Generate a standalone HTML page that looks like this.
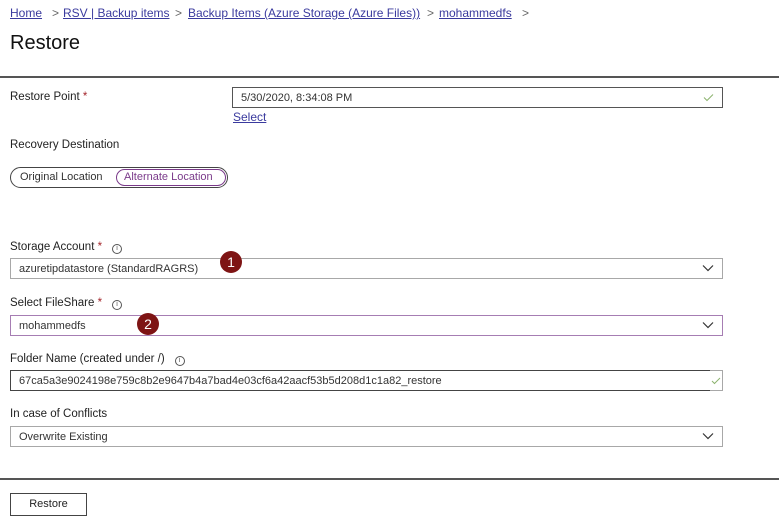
<!DOCTYPE html>
<html><head><meta charset="utf-8"><style>
*{margin:0;padding:0;box-sizing:border-box}
body{width:779px;height:519px;background:#fff;font-family:"Liberation Sans",sans-serif;font-size:11.5px;color:#222;position:relative;overflow:hidden}
.a{position:absolute;white-space:nowrap}
.lk{color:#3a3a9e;text-decoration:underline;font-size:12px}
.gt{color:#666;font-size:12px}
.box{position:absolute;border:1px solid #a8a8a8;background:#fff;font-size:11px}
.txt{position:absolute;left:8px;top:4px;color:#333}
.req{color:#a4262c}
.info{display:inline-block;width:10px;height:10px;border:1px solid #555;border-radius:50%;font-size:7px;line-height:8px;text-align:center;margin-left:10px;vertical-align:0;color:#555}
.chev{position:absolute;right:8px;top:5px}
.badge{position:absolute;width:22px;height:22px;border-radius:50%;background:#7e1414;color:#fff;font-size:14px;text-align:center;line-height:22px}
</style></head><body>
<span class="a lk" style="left:10px;top:6px">Home</span>
<span class="a gt" style="left:52px;top:6px">&gt;</span>
<span class="a lk" style="left:63px;top:6px">RSV | Backup items</span>
<span class="a gt" style="left:175px;top:6px">&gt;</span>
<span class="a lk" style="left:188px;top:6px">Backup Items (Azure Storage (Azure Files))</span>
<span class="a gt" style="left:427px;top:6px">&gt;</span>
<span class="a lk" style="left:439px;top:6px">mohammedfs</span>
<span class="a gt" style="left:522px;top:6px">&gt;</span>
<div class="a" style="left:10px;top:32px;font-size:20px;color:#111">Restore</div>
<div class="a" style="left:0;top:76px;width:779px;height:2px;background:#555"></div>

<div class="a" style="left:10px;top:91px">Restore Point <span class="req">*</span></div>
<div class="box" style="left:232px;top:87px;width:491px;height:21px;border-color:#555"><span class="txt">5/30/2020, 8:34:08 PM</span>
<svg class="chev" style="top:5px" width="11" height="9" viewBox="0 0 11 9"><path d="M1 4.5L4 7.5L10 1.5" fill="none" stroke="#8cb36e" stroke-width="1"/></svg></div>
<span class="a" style="left:233px;top:110px;color:#3a3a9e;text-decoration:underline;font-size:12px">Select</span>

<div class="a" style="left:10px;top:139px">Recovery Destination</div>
<div class="a" style="left:10px;top:167px;width:218px;height:21px;border:1px solid #444;border-radius:11px"></div>
<div class="a" style="left:20px;top:171px;color:#333;font-size:11px">Original Location</div>
<div class="a" style="left:116px;top:169px;width:110px;height:17px;border:1px solid #7a3a8a;border-radius:9px;color:#7a3a8a;padding-left:7px;line-height:15px;font-size:11px">Alternate Location</div>

<div class="a" style="left:10px;top:241px">Storage Account <span class="req">*</span><span class="info">i</span></div>
<div class="box" style="left:10px;top:258px;width:713px;height:21px"><span class="txt">azuretipdatastore (StandardRAGRS)</span>
<svg class="chev" width="12" height="8" viewBox="0 0 12 8"><path d="M1 1.5L6 6.5L11 1.5" fill="none" stroke="#333" stroke-width="1.2"/></svg></div>
<div class="badge" style="left:220px;top:251px">1</div>

<div class="a" style="left:10px;top:297px">Select FileShare <span class="req">*</span><span class="info">i</span></div>
<div class="box" style="left:10px;top:315px;width:713px;height:21px;border-color:#a67db3"><span class="txt">mohammedfs</span>
<svg class="chev" width="12" height="8" viewBox="0 0 12 8"><path d="M1 1.5L6 6.5L11 1.5" fill="none" stroke="#333" stroke-width="1.2"/></svg></div>
<div class="badge" style="left:137px;top:313px">2</div>

<div class="a" style="left:10px;top:353px">Folder Name (created under /)<span class="info">i</span></div>
<div class="box" style="left:10px;top:370px;width:701px;height:21px;border-color:#444"><span class="txt" style="left:8px">67ca5a3e9024198e759c8b2e9647b4a7bad4e03cf6a42aacf53b5d208d1c1a82_restore</span></div>
<div class="box" style="left:710px;top:370px;width:13px;height:21px;border-left:none"><svg style="position:absolute;left:1px;top:6px" width="10" height="8" viewBox="0 0 10 8"><path d="M1 4L3.5 6.5L9 1" fill="none" stroke="#8cb36e" stroke-width="1"/></svg></div>

<div class="a" style="left:10px;top:408px">In case of Conflicts</div>
<div class="box" style="left:10px;top:426px;width:713px;height:21px"><span class="txt">Overwrite Existing</span>
<svg class="chev" width="12" height="8" viewBox="0 0 12 8"><path d="M1 1.5L6 6.5L11 1.5" fill="none" stroke="#333" stroke-width="1.2"/></svg></div>

<div class="a" style="left:0;top:478px;width:779px;height:2px;background:#555"></div>
<div class="a" style="left:10px;top:493px;width:77px;height:23px;border:1px solid #444;text-align:center;line-height:21px;color:#222;font-size:11px">Restore</div>
</body></html>
